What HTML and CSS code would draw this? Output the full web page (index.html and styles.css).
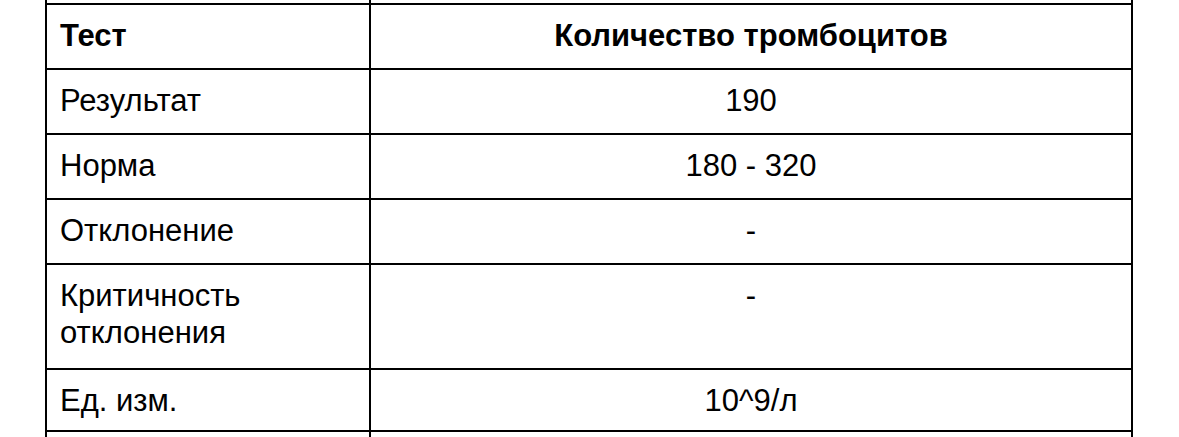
FILE: index.html
```html
<!DOCTYPE html>
<html lang="ru">
<head>
<meta charset="utf-8">
<title>Количество тромбоцитов</title>
<link rel="stylesheet" href="styles.css">
</head>
<body>
<div class="grid">
  <div class="cell edge"></div><div class="cell edge"></div>
  <div class="cell key head">Тест</div><div class="cell val head">Количество тромбоцитов</div>
  <div class="cell key">Результат</div><div class="cell val">190</div>
  <div class="cell key">Норма</div><div class="cell val">180 - 320</div>
  <div class="cell key">Отклонение</div><div class="cell val">-</div>
  <div class="cell key">Критичность<br>отклонения</div><div class="cell val">-</div>
  <div class="cell key">Ед. изм.</div><div class="cell val">10^9/л</div>
  <div class="cell edge"></div><div class="cell edge"></div>
</div>
</body>
</html>
```
FILE: styles.css
```css
html, body {
  margin: 0;
  background: #fff;
}
body {
  padding-left: 45px;
  height: 437px;
  overflow: hidden;
  font-family: "Liberation Sans", Arial, sans-serif;
  font-size: 31px;
  line-height: 37px;
  color: #000;
}
.grid {
  display: grid;
  grid-template-columns: 324px 762px;
  grid-template-rows: 5px 65px 65px 65px 65px 105px 62px 10px;
  border-left: 2px solid #000;
  width: 1086px;
}
.cell {
  box-sizing: border-box;
  border-right: 2px solid #000;
  border-bottom: 2px solid #000;
  padding: 12px 12px 0 13px;
}
.edge {
  padding: 0;
}
.grid > .edge:nth-last-child(-n+2) {
  border-bottom: none;
}
.val {
  text-align: center;
  padding-left: 12px;
}
.head {
  font-weight: bold;
}
```
